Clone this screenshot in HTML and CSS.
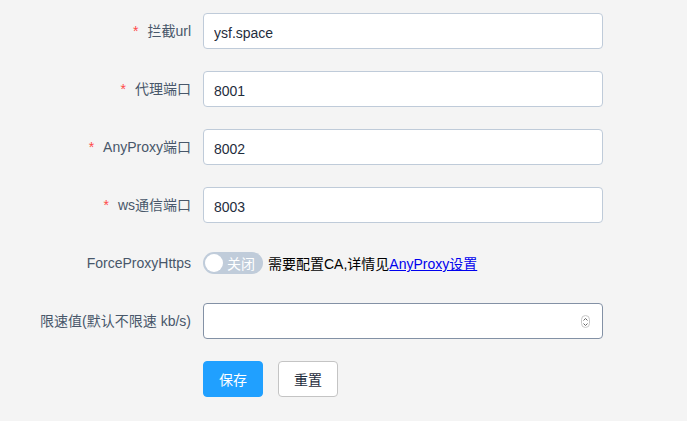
FILE: index.html
```html
<!DOCTYPE html>
<html>
<head>
<meta charset="utf-8">
<link rel="stylesheet" href="styles.css">
</head>
<body>
<form class="form">
  <div class="item">
    <label class="label required">拦截url</label>
    <div class="content"><input class="input" type="text" value="ysf.space"></div>
  </div>
  <div class="item">
    <label class="label required">代理端口</label>
    <div class="content"><input class="input" type="text" value="8001"></div>
  </div>
  <div class="item">
    <label class="label required">AnyProxy端口</label>
    <div class="content"><input class="input" type="text" value="8002"></div>
  </div>
  <div class="item">
    <label class="label required">ws通信端口</label>
    <div class="content"><input class="input" type="text" value="8003"></div>
  </div>
  <div class="item">
    <label class="label">ForceProxyHttps</label>
    <div class="content inline">
      <span class="switch"><span class="knob"></span><span class="switch-text">关闭</span></span>
      <span class="note">需要配置CA,详情见<a href="#" class="link">AnyProxy设置</a></span>
    </div>
  </div>
  <div class="item">
    <label class="label">限速值(默认不限速 kb/s)</label>
    <div class="content number-wrap">
      <input class="input number" type="number">
      <span class="spin"><svg width="7" height="12" viewBox="0 0 7 12"><path d="M1.5 4.5 L3.5 2.5 L5.5 4.5 M1.5 7.5 L3.5 9.5 L5.5 7.5" fill="none" stroke="#666" stroke-width="1"/></svg></span>
    </div>
  </div>
  <div class="item">
    <span class="label"></span>
    <div class="content inline">
      <button type="button" class="btn primary">保存</button>
      <button type="button" class="btn">重置</button>
    </div>
  </div>
</form>
</body>
</html>
```
FILE: styles.css
```css
html, body {
  margin: 0;
  padding: 0;
  background: #f4f4f4;
}
body {
  font-family: "Liberation Sans", "Noto Sans CJK SC", sans-serif;
  font-size: 14px;
  color: #1f2d3d;
}
.form {
  padding-top: 13px;
}
.item {
  display: flex;
  align-items: center;
  height: 36px;
  margin-bottom: 22px;
}
.label {
  width: 191px;
  padding-right: 12px;
  text-align: right;
  color: #48576a;
  line-height: 36px;
  flex: none;
}
.label.required::before {
  content: "*";
  color: #ff4949;
  margin-right: 9px;
}
.content {
  width: 400px;
  position: relative;
}
.content.inline {
  display: flex;
  align-items: center;
}
.input {
  box-sizing: border-box;
  width: 400px;
  height: 36px;
  border: 1px solid #bfcbd9;
  border-radius: 4px;
  background: #fff;
  padding: 3px 10px 0;
  font-family: inherit;
  font-size: 14px;
  color: #1f2d3d;
  outline: none;
}
.number {
  border-color: #8391a5;
  -moz-appearance: textfield;
}
.number::-webkit-inner-spin-button,
.number::-webkit-outer-spin-button {
  -webkit-appearance: none;
  margin: 0;
}
.spin {
  position: absolute;
  right: 13px;
  top: 12px;
  width: 9px;
  height: 13px;
  box-sizing: border-box;
  border: 1px solid #c8c8c8;
  border-radius: 5px;
  display: flex;
  align-items: center;
  justify-content: center;
}
.spin svg { display: block; }
.switch {
  position: relative;
  width: 60px;
  height: 22px;
  border-radius: 11px;
  background: #c0ccda;
  display: flex;
  align-items: center;
  flex: none;
}
.knob {
  width: 18px;
  height: 18px;
  border-radius: 50%;
  background: #fff;
  margin-left: 2px;
}
.switch-text {
  color: #fff;
  font-size: 14px;
  margin-left: 4px;
}
.note {
  margin-left: 5px;
  color: #000;
  font-size: 14px;
}
.link {
  color: #0000ee;
  text-decoration: underline;
}
.btn {
  box-sizing: border-box;
  width: 60px;
  height: 36px;
  border: 1px solid #c4c4c4;
  border-radius: 4px;
  background: #fff;
  color: #1f2d3d;
  font-family: inherit;
  font-size: 14px;
  padding: 0;
  margin-right: 15px;
}
.btn.primary {
  background: #20a0ff;
  border-color: #20a0ff;
  color: #fff;
}
```
